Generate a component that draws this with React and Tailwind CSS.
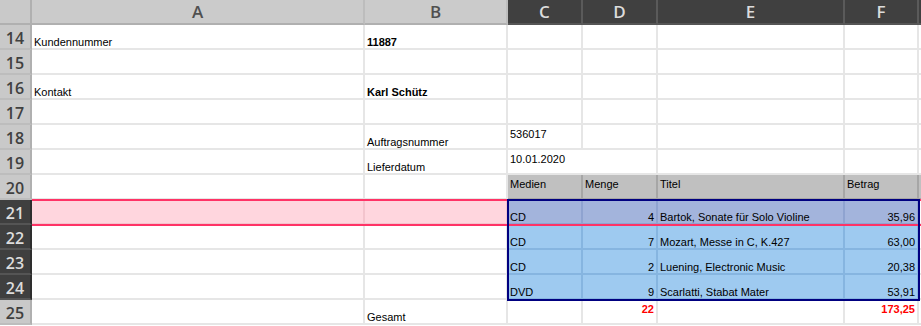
import clsx from 'clsx';

const cellFont = { fontFamily: '"Liberation Sans", Arial, sans-serif' };
const headFont = { fontFamily: '"Open Sans", "Noto Sans", sans-serif' };

const colW = ['w-[333px]', 'w-[143px]', 'w-[75px]', 'w-[75px]', 'w-[187px]', 'w-[74px]'];
const letters = ['A', 'B', 'C', 'D', 'E', 'F'];

function RowHead({ n, dark }) {
  return (
    <div
      style={headFont}
      className={clsx(
        'w-[32px] shrink-0 h-full flex items-center justify-center pt-[2px] text-[16px] font-semibold border-r-2 border-b-2',
        dark ? 'bg-[#3f3f3f] text-[#dcdcdc] border-r-[#2e2e2e] border-b-[#555]' : 'bg-[#c9c9c9] text-[#404040] border-r-[#b0b0b0] border-b-[#bdbdbd]'
      )}
    >
      {n}
    </div>
  );
}

function Cell({ w, children, right, top, bold, red, noRight, className }) {
  return (
    <div
      style={cellFont}
      className={clsx(
        'shrink-0 h-full flex px-[2px] border-b-2 text-[11px] leading-[12px] whitespace-nowrap',
        w,
        right ? 'justify-end' : 'justify-start',
        top ? 'items-start pt-[3px]' : 'items-end pb-0',
        bold && 'font-bold',
        red ? 'text-[#ff0000]' : 'text-black',
        noRight ? '' : 'border-r-2',
        className || 'border-[#e6e6e6]'
      )}
    >
      {children}
    </div>
  );
}

function Row({ n, dark, children, tail }) {
  return (
    <div className="flex h-[25px]">
      <RowHead n={n} dark={dark} />
      {children}
      <div className={clsx('flex-1 border-b-2', tail || 'border-[#e6e6e6]')} />
    </div>
  );
}

const hdr = 'bg-[#c0c0c0] border-[#a6a6a6] text-[#222]';
const pinkBlue = 'bg-[#a3b4dc] border-[#8fa3d0]';
const blue = 'bg-[#9ecaf0] border-[#86b5e0]';

const items = [
  ['CD', '4', 'Bartok, Sonate für Solo Violine', '35,96'],
  ['CD', '7', 'Mozart, Messe in C, K.427', '63,00'],
  ['CD', '2', 'Luening, Electronic Music', '20,38'],
  ['DVD', '9', 'Scarlatti, Stabat Mater', '53,91'],
];

export default function App() {
  return (
    <div className="relative w-[921px] h-[326px] overflow-hidden bg-white">
      {/* column headers */}
      <div className="flex h-[25px]" style={headFont}>
        <div className="w-[32px] shrink-0 bg-[#c9c9c9] border-r-2 border-b-2 border-[#b0b0b0]" />
        {letters.map((l, i) => {
          const dark = i >= 2;
          return (
            <div
              key={l}
              className={clsx(
                'shrink-0 flex items-center justify-center text-[17px] font-semibold border-r-2 border-b-2',
                colW[i],
                dark ? 'bg-[#404040] text-[#dcdcdc] border-r-[#5a5a5a] border-b-[#555]' : 'bg-[#cbcbcb] text-[#505050] border-r-[#bdbdbd] border-b-[#b0b0b0]'
              )}
            >
              {l}
            </div>
          );
        })}
        <div className="flex-1 bg-[#404040] border-b-2 border-[#555]" />
      </div>

      <Row n={14}>
        <Cell w={colW[0]}>Kundennummer</Cell>
        <Cell w={colW[1]} bold>11887</Cell>
        <Cell w={colW[2]} />
        <Cell w={colW[3]} />
        <Cell w={colW[4]} />
        <Cell w={colW[5]} />
      </Row>
      <Row n={15}>
        {colW.map((w) => <Cell key={w + '15'} w={w} />)}
      </Row>
      <Row n={16}>
        <Cell w={colW[0]}>Kontakt</Cell>
        <Cell w={colW[1]} bold>Karl Schütz</Cell>
        <Cell w={colW[2]} />
        <Cell w={colW[3]} />
        <Cell w={colW[4]} />
        <Cell w={colW[5]} />
      </Row>
      <Row n={17}>
        {colW.map((w) => <Cell key={w + '17'} w={w} />)}
      </Row>
      <Row n={18}>
        <Cell w={colW[0]} />
        <Cell w={colW[1]}>Auftragsnummer</Cell>
        <Cell w={colW[2]} top>536017</Cell>
        <Cell w={colW[3]} />
        <Cell w={colW[4]} />
        <Cell w={colW[5]} />
      </Row>
      <Row n={19}>
        <Cell w={colW[0]} />
        <Cell w={colW[1]}>Lieferdatum</Cell>
        <Cell w={colW[2]} top noRight>10.01.2020</Cell>
        <Cell w={colW[3]} />
        <Cell w={colW[4]} />
        <Cell w={colW[5]} />
      </Row>
      <Row n={20} tail="bg-[#c0c0c0] border-[#a6a6a6]">
        <Cell w={colW[0]} />
        <Cell w={colW[1]} />
        <Cell w={colW[2]} top className={hdr}>Medien</Cell>
        <Cell w={colW[3]} top className={hdr}>Menge</Cell>
        <Cell w={colW[4]} top className={hdr}>Titel</Cell>
        <Cell w={colW[5]} top className={hdr}>Betrag</Cell>
      </Row>
      {items.map((it, i) => {
        const cls = i === 0 ? pinkBlue : blue;
        return (
          <Row key={it[2]} n={21 + i} dark>
            <Cell w={colW[0]} className={i === 0 ? 'bg-[#ffd6de] border-[#f3c4cd]' : undefined} />
            <Cell w={colW[1]} className={i === 0 ? 'bg-[#ffd6de] border-[#f3c4cd]' : undefined} />
            <Cell w={colW[2]} className={cls}>{it[0]}</Cell>
            <Cell w={colW[3]} right className={cls}>{it[1]}</Cell>
            <Cell w={colW[4]} className={cls}>{it[2]}</Cell>
            <Cell w={colW[5]} right className={cls}>{it[3]}</Cell>
          </Row>
        );
      })}
      <Row n={25}>
        <Cell w={colW[0]} />
        <Cell w={colW[1]}>Gesamt</Cell>
        <Cell w={colW[2]} />
        <Cell w={colW[3]} right top bold red>22</Cell>
        <Cell w={colW[4]} />
        <Cell w={colW[5]} right top bold red>173,25</Cell>
      </Row>

      {/* selected row outline */}
      <div className="absolute left-[32px] right-0 top-[199px] h-[2px] bg-[#ff3366]" />
      <div className="absolute left-[32px] right-0 top-[224px] h-[2px] bg-[#ff3366]" />
      {/* selection range */}
      <div className="absolute left-[507px] top-[199px] w-[413px] h-[102px] border-2 border-[#000080]" />
    </div>
  );
}
